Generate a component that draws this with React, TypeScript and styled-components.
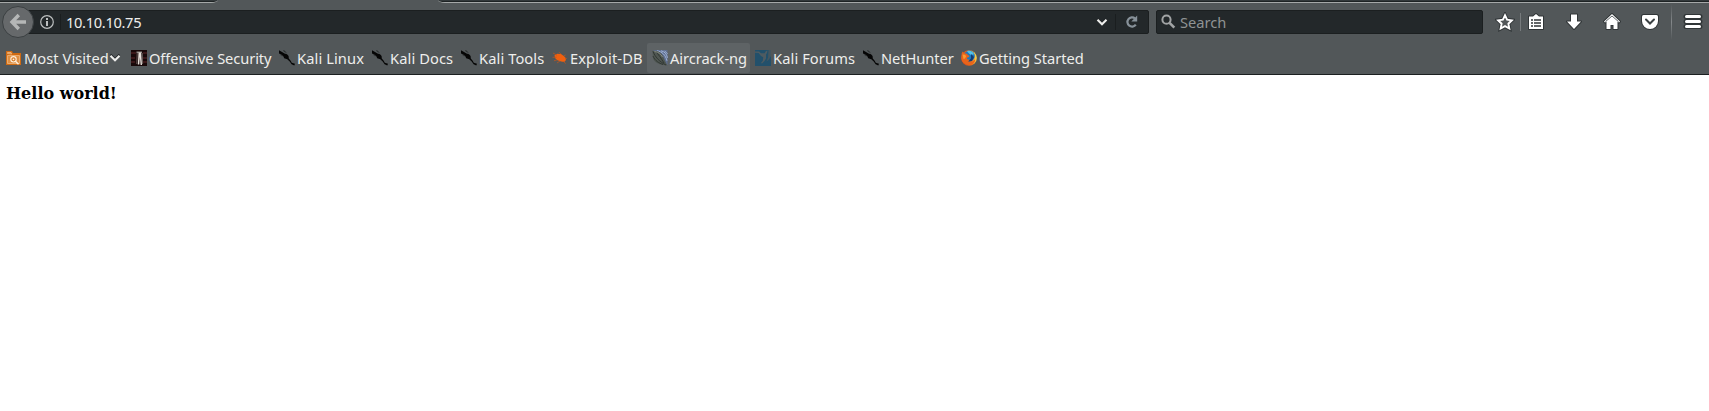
import React from "react";
import styled, { createGlobalStyle } from "styled-components";

const Global = createGlobalStyle`
  body { margin: 0; background: #fff; overflow: hidden; }
  svg { display: block; flex: none; }
`;

const Browser = styled.div`
  width: 1709px;
  height: 411px;
  overflow: hidden;
  font-family: "Noto Sans", sans-serif;
  font-size: 14.67px;
  color: #eeeeec;
`;

const Chrome = styled.header`
  box-sizing: border-box;
  height: 75px;
  background: #525759;
  border-bottom: 1px solid #1b1f20;
`;

const TabStrip = styled.div`
  display: flex;
  justify-content: space-between;
  height: 3px;
`;

const InactiveTab = styled.div<{ $width: number; $side: "left" | "right" }>`
  box-sizing: border-box;
  width: ${(p) => p.$width}px;
  height: 3px;
  background: linear-gradient(#33393b 0 1px, #1e2324 1px);
  border-bottom: 1px solid #a5a8a8;
  ${(p) => (p.$side === "left" ? "border-bottom-right-radius: 7px 3px;" : "border-bottom-left-radius: 7px 3px;")}
`;

const NavBar = styled.nav`
  display: flex;
  align-items: center;
  height: 38px;
`;

const BackButton = styled.button`
  display: flex;
  align-items: center;
  justify-content: center;
  box-sizing: border-box;
  width: 32px;
  height: 32px;
  margin: 0 -16px 0 2px;
  padding: 0;
  border: 1px solid #3b4042;
  border-radius: 50%;
  background: #66696b;
  z-index: 1;
`;

const Field = styled.div<{ $width: number; $padding: string; $gap?: number }>`
  display: flex;
  align-items: center;
  box-sizing: border-box;
  width: ${(p) => p.$width}px;
  height: 24px;
  margin-left: ${(p) => p.$gap ?? 0}px;
  padding: ${(p) => p.$padding};
  border: 1px solid #1b1f20;
  border-radius: 2px;
  background: #23282a;
`;

const FieldRule = styled.span<{ $before: number; $after: number }>`
  width: 1px;
  height: 16px;
  margin: 0 ${(p) => p.$after}px 0 ${(p) => p.$before}px;
  background: #1a1e1f;
`;

const Address = styled.span`
  flex: 1;
  line-height: 22px;
  letter-spacing: -0.33px;
`;

const Placeholder = styled.span`
  margin-left: 3px;
  line-height: 22px;
  color: #8f9394;
`;

const Actions = styled.div`
  display: flex;
  align-items: center;
  margin-left: 12px;
`;

const ActionRule = styled.span<{ $height: number; $margin: string; $fade?: boolean }>`
  width: 1px;
  height: ${(p) => p.$height}px;
  margin: ${(p) => p.$margin};
  background: ${(p) => (p.$fade ? "linear-gradient(transparent, #84888a 50%, transparent)" : "#777b7d")};
`;

const Action = styled.button<{ $gap: number }>`
  width: 20px;
  height: 20px;
  margin: 0 ${(p) => p.$gap}px 0 0;
  padding: 0;
  border: 0;
  background: none;
`;

const Bookmarks = styled.div`
  display: flex;
  height: 33px;
  padding: 2px 0 0 1px;
`;

const Bookmark = styled.a<{ $width: number; $active?: boolean }>`
  display: flex;
  align-items: center;
  box-sizing: border-box;
  flex: none;
  width: ${(p) => p.$width}px;
  height: 30px;
  padding-left: 5px;
  border-radius: 2px;
  background: ${(p) => (p.$active ? "#5e6365" : "transparent")};
  white-space: nowrap;
`;

const Label = styled.span<{ $tracking: number }>`
  margin-left: 2px;
  line-height: 20px;
  letter-spacing: ${(p) => p.$tracking}px;
`;

const Page = styled.main`
  padding: 9px 6px;
  font: bold 16px/19px "DejaVu Serif", serif;
  color: #000;
`;

const FolderIcon = () => (
  <svg width="16" height="16" viewBox="0 0 16 16">
    <path d="M0 15V1h6l1 2h8v12z" fill="#cf6a12" />
    <path d="M1.5 3.500V2.500H5L5.700 4zM1.500 5.500h12v8h-12z" fill="#df8f43" stroke="#efb981" strokeWidth=".8" />
    <circle cx="7.500" cy="9.300" r="2.700" fill="#d67d2c" stroke="#fff0dd" strokeWidth="1.100" />
    <circle cx="7.500" cy="9.300" r=".9" fill="#fff0dd" />
    <path d="M9.500 11.300l3 3" stroke="#fff0dd" strokeWidth="1.400" />
  </svg>
);

const OffsecIcon = () => (
  <svg width="16" height="16" viewBox="0 0 16 16">
    <path d="M0 0h16v16H0z" fill="#180809" />
    <path d="M0 3h5M0 8h4M0 12h4M12 3h4M12 8h4M12 12h4" stroke="#3a1719" strokeWidth="2" />
    <path d="M5.500 1.500h5.500v1.500H5.500z" fill="#8f8884" />
    <path d="M7.500 2.500h2.700L11 15H9.600L8.900 7l-.6 7.500H6.800z" fill="#e6dfd9" />
    <path d="M6.200 3l-.4 11" stroke="#6a5c59" />
    <path d="M11.200 3l.4 11" stroke="#8d8480" strokeWidth=".7" />
  </svg>
);

const KaliIcon = () => (
  <svg width="16" height="16" viewBox="0 0 16 16">
    <path d="M0 .3L2.600 1.800 5.500 3.600 8 4.300 9.600 6 9.800 8.600 11.500 10.400 12.800 12.700 16 13.800 15.300 15.600 12.600 14.300 10.700 11.500 8.300 9.200 5.200 8.300 4.300 6.200 2.200 4.400 0 3.600z" fill="#050505" />
    <path d="M4 .3l2.300 2M1.500 4.500l1.500 1.800M5 .5l2.500 2.300" stroke="#25292a" strokeWidth=".7" />
  </svg>
);

const ExploitIcon = () => (
  <svg width="16" height="16" viewBox="0 0 16 16">
    <path d="M2.500 5.200l2.600-1.500 3.900.4 2.800 2 2.200 2.100-.3 2.300-1.500 1.600-3-.5-3.800-1.400L3 8z" fill="#f0600f" />
    <path d="M1 3l4 2.200M7 2.200l2 2M.5 7.300h4M12 6l1.600-1M13 8.500h1.800M5 9.800l-3 1M8 11l-3 2M11.500 11.500l2.300 2" stroke="#ba5520" strokeWidth=".8" fill="none" />
  </svg>
);

const AircrackIcon = () => (
  <svg width="16" height="16" viewBox="0 0 16 16">
    <path d="M1 0h14.500v15.500z" fill="#5f6f90" />
    <path d="M5 .8c5 .8 8.500 4 10 10M9 .8c4 1 5.500 3 6.500 7M12.500 .8l3 3" stroke="#a0b2d6" strokeWidth="1" fill="none" />
    <path d="M.5 1c5-.8 8.500 1.200 10.500 5 1 3 2.500 6 4.500 9.500C8 15 1.500 13 .8 7z" fill="#4f5651" />
    <path d="M1 1.500c2 5 6 10 13 13.500M4 1.500C6 4 9 8 12 13M1 6c2 5 6 7 10 8.500" stroke="#2d3330" strokeWidth=".9" fill="none" />
    <path d="M2.500 1.500c4 .5 6.500 2.500 8 5.500" stroke="#858b84" fill="none" />
  </svg>
);

const ForumsIcon = () => (
  <svg width="16" height="16" viewBox="0 0 16 16">
    <path d="M0 0h16v16H0z" fill="#22506b" />
    <path d="M0 1.500h4L6 3.300h3.500L11 1l1.500-.6L12 3l-1 1.500v4L9.500 11 7 13.500 6 13l1.800-2.200.4-3.600L6 6 3.600 3 0 2.800z" fill="#4e5b61" />
    <path d="M13.500 0H16v6l-2 3.500-2.500 2 1.500-4z" fill="#45565f" />
  </svg>
);

const FirefoxIcon = () => (
  <svg width="16" height="16" viewBox="0 0 16 16">
    <defs>
      <linearGradient id="fox" x1="0" x2="1" y1=".6" y2=".4">
        <stop offset="0" stopColor="#dc4518" />
        <stop offset=".6" stopColor="#ef6c17" />
        <stop offset="1" stopColor="#ffe34e" />
      </linearGradient>
    </defs>
    <circle cx="8" cy="8" r="7.8" fill="url(#fox)" />
    <circle cx="8.4" cy="6" r="5.400" fill="#1b79bd" />
    <path d="M6 1.200c3-1 6 .3 7 3L10 5 7.500 3z" fill="#56c0e6" />
    <path d="M10 4l3 3-2 4-4 .5 3-3z" fill="#173b72" />
    <path d="M.8 3l1-1.500L3 3.200l2.500.2L7 5 8.600 6 7.600 7.200 6 7.800l.2 1.500 2.500.5-2 2 4 .4 3-2.700c1 2-1.500 5-5 5.200C3 15 .4 11 .3 8z" fill="#e8641b" />
    <path d="M1.600 4.500l2 .2L5.300 6 4 8.500 2.500 9z" fill="#fa9b31" />
  </svg>
);

type BookmarkItem = {
  label: string;
  icon: React.ReactNode;
  width: number;
  tracking?: number;
  active?: boolean;
  menu?: boolean;
};

const BOOKMARKS: BookmarkItem[] = [
  { label: "Most Visited", icon: <FolderIcon />, width: 125, tracking: 0.05, menu: true },
  { label: "Offensive Security", icon: <OffsecIcon />, width: 148, tracking: -0.1 },
  { label: "Kali Linux", icon: <KaliIcon />, width: 93, tracking: 0.1 },
  { label: "Kali Docs", icon: <KaliIcon />, width: 89, tracking: 0.1 },
  { label: "Kali Tools", icon: <KaliIcon />, width: 91, tracking: 0.1 },
  { label: "Exploit-DB", icon: <ExploitIcon />, width: 100, tracking: 0.1 },
  { label: "Aircrack-ng", icon: <AircrackIcon />, width: 103, tracking: -0.05, active: true },
  { label: "Kali Forums", icon: <ForumsIcon />, width: 108, tracking: 0.1 },
  { label: "NetHunter", icon: <KaliIcon />, width: 98, tracking: -0.05 },
  { label: "Getting Started", icon: <FirefoxIcon />, width: 130, tracking: -0.05 },
];

const Chevron = () => (
  <svg width="12" height="10" viewBox="0 0 12 10">
    <path d="M1.500 1.500L6 6l4.500-4.500" stroke="#25292b" strokeWidth="2" fill="none" />
    <path d="M1.500 2.800L6 7.200l4.500-4.400" stroke="#eeeeec" strokeWidth="2.100" fill="none" />
  </svg>
);

const outline = { stroke: "#303537", strokeWidth: 2, strokeLinejoin: "round" as const, paintOrder: "stroke" };

export default function App() {
  return (
    <Browser>
      <Global />
      <Chrome>
        <TabStrip>
          <InactiveTab $width={218} $side="left" />
          <InactiveTab $width={1271} $side="right" />
        </TabStrip>
        <NavBar>
          <BackButton aria-label="Back">
            <svg width="18" height="18" viewBox="0 0 18 18">
              <path d="M9.800 2L3 9l6.800 7M4 9h13" stroke="#b5b7b7" strokeWidth="3.400" fill="none" />
            </svg>
          </BackButton>
          <Field $width={1131} $padding="0 8px 0 20px">
            <svg width="16" height="16" viewBox="0 0 16 16">
              <circle cx="8" cy="8" r="6.300" fill="none" stroke="#bcbfbf" strokeWidth="1.200" />
              <path d="M7 4h2v2H7zM7 7h2v5H7z" fill="#bcbfbf" />
            </svg>
            <FieldRule $before={5} $after={5} />
            <Address>10.10.10.75</Address>
            <Chevron />
            <FieldRule $before={7} $after={8} />
            <svg width="16" height="16" viewBox="0 0 16 16">
              <path d="M11.800 10.700A4.600 4.600 0 1 1 11 4.500" stroke="#879199" strokeWidth="2.200" fill="none" />
              <path d="M13.200 1.500v6H7.300z" fill="#879199" />
            </svg>
          </Field>
          <Field $width={327} $padding="0 0 0 4px" $gap={7}>
            <svg width="16" height="16" viewBox="0 0 16 16">
              <circle cx="5.500" cy="5.700" r="4.100" stroke="#a2a4a5" strokeWidth="2" fill="none" />
              <path d="M8.600 8.800l4.700 4.900" stroke="#a2a4a5" strokeWidth="2.600" />
            </svg>
            <Placeholder>Search</Placeholder>
          </Field>
          <Actions>
            <Action $gap={5} aria-label="Bookmark">
              <svg width="20" height="20" viewBox="0 0 20 20">
                <path d="M10 3.200l2.100 4.400 4.800.7-3.500 3.400.9 4.800L10 14.200l-4.300 2.300.9-4.800-3.500-3.400 4.800-.7z" fill="none" stroke="#303537" strokeWidth="3.800" />
                <path d="M10 3.200l2.100 4.400 4.800.7-3.500 3.400.9 4.800L10 14.200l-4.300 2.300.9-4.800-3.500-3.400 4.800-.7z" fill="#525759" stroke="#fff" strokeWidth="1.900" />
              </svg>
            </Action>
            <ActionRule $height={18} $margin="0 5px 0 0" />
            <Action $gap={18} aria-label="Reading list">
              <svg width="20" height="20" viewBox="0 0 20 20">
                <path d="M3 4.500h4L10 2l3 2.500h4V17H3z" fill="#fff" {...outline} />
                <path d="M5 8h2M8 8h7M5 11h2M8 11h7M5 14h2M8 14h7" stroke="#303537" strokeWidth="1.400" />
              </svg>
            </Action>
            <Action $gap={18} aria-label="Downloads">
              <svg width="20" height="20" viewBox="0 0 20 20">
                <path d="M7 2.500h6v7h4L10 17 3 9.500h4z" fill="#fff" {...outline} />
              </svg>
            </Action>
            <Action $gap={18} aria-label="Home">
              <svg width="20" height="20" viewBox="0 0 20 20">
                <path d="M10 2l8 7.500-1 1-1.500-1V17h-4v-4h-3v4h-4V9.500l-1.500 1-1-1z" fill="#fff" {...outline} />
                <path d="M3.500 9.600L10 4l6.500 5.600" stroke="#61676a" strokeWidth="1" fill="none" />
              </svg>
            </Action>
            <Action $gap={11} aria-label="Pocket">
              <svg width="20" height="20" viewBox="0 0 20 20">
                <path d="M3.500 3h13q1.500 0 1.500 1.500V9a8 8 0 0 1-16 0V4.500Q2 3 3.500 3z" fill="#fff" {...outline} />
                <path d="M6 7.500l4 4 4-4" stroke="#3b4143" strokeWidth="2" fill="none" strokeLinecap="round" />
              </svg>
            </Action>
            <ActionRule $height={36} $margin="0 11px 0 0" $fade />
            <Action $gap={0} aria-label="Menu">
              <svg width="20" height="20" viewBox="0 0 20 20">
                <path d="M3 4.500h14M3 9.500h14M3 14.500h14" stroke="#303537" strokeWidth="5" strokeLinecap="round" />
                <path d="M3.500 4.500h13M3.500 9.500h13M3.500 14.500h13" stroke="#fff" strokeWidth="3" strokeLinecap="round" />
              </svg>
            </Action>
          </Actions>
        </NavBar>
        <Bookmarks>
          {BOOKMARKS.map((b) => (
            <Bookmark key={b.label} $width={b.width} $active={b.active}>
              {b.icon}
              <Label $tracking={b.tracking ?? 0}>{b.label}</Label>
              {b.menu && <Chevron />}
            </Bookmark>
          ))}
        </Bookmarks>
      </Chrome>
      <Page>Hello world!</Page>
    </Browser>
  );
}
